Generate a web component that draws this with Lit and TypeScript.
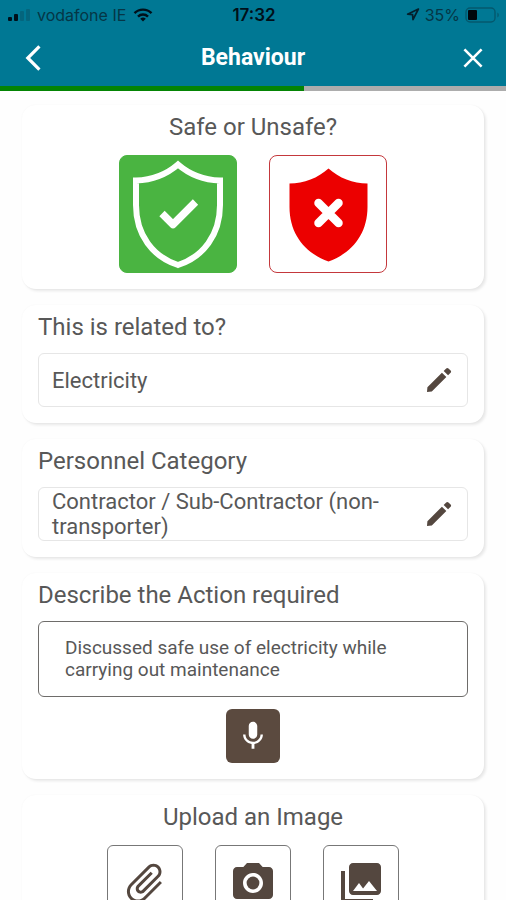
import { LitElement, html, css, svg } from "lit";
import { customElement, property, state } from "lit/decorators.js";
import { classMap } from "lit/directives/class-map.js";

const glyphs = {
  edit: svg`<path d="M3.300 17.400L3 21l3.600-.300L17.500 9.800l-3.300-3.300L3.300 17.400zM20.700 6.600c.500-.500.500-1.200 0-1.700l-1.600-1.600c-.500-.500-1.200-.500-1.700 0l-1.900 1.900 3.300 3.300 1.900-1.900z"/>`,
  mic: svg`<path d="M12 14c1.66 0 2.99-1.34 2.99-3L15 5c0-1.66-1.34-3-3-3S9 3.34 9 5v6c0 1.66 1.34 3 3 3zm5.3-3c0 3-2.54 5.1-5.3 5.1S6.7 14 6.7 11H5c0 3.41 2.72 6.23 6 6.72V21h2v-3.28c3.28-.48 6-3.3 6-6.72h-1.7z"/>`,
  clip: svg`<path transform="rotate(45 12 12)" d="M16.5 6v11.5c0 2.21-1.79 4-4 4s-4-1.79-4-4V5c0-1.38 1.12-2.5 2.5-2.5s2.5 1.12 2.5 2.5v10.5c0 .55-.45 1-1 1s-1-.45-1-1V6H10v9.5c0 1.38 1.12 2.5 2.5 2.5s2.5-1.12 2.5-2.5V5c0-2.21-1.79-4-4-4S7 2.79 7 5v12.5c0 3.04 2.46 5.5 5.5 5.5s5.5-2.46 5.5-5.5V6h-1.5z"/>`,
  camera: svg`<circle cx="12" cy="12" r="3.2"/><path d="M9 2L7.17 4H4c-1.1 0-2 .9-2 2v12c0 1.1.9 2 2 2h16c1.1 0 2-.9 2-2V6c0-1.1-.9-2-2-2h-3.17L15 2H9zm3 15c-2.76 0-5-2.24-5-5s2.24-5 5-5 5 2.24 5 5-2.24 5-5 5z"/>`,
  gallery: svg`<path d="M22 16V4c0-1.1-.9-2-2-2H8c-1.1 0-2 .9-2 2v12c0 1.1.9 2 2 2h12c1.1 0 2-.9 2-2zm-11-4l2.03 2.71L16 11l4 5H8l3-4zM2 6v14c0 1.1.9 2 2 2h14v-2H4V6H2z"/>`,
};

@customElement("app-icon")
class AppIcon extends LitElement {
  @property() name: keyof typeof glyphs = "edit";

  static styles = css`
    :host {
      display: block;
      flex: none;
    }
    .icon {
      display: block;
      width: 100%;
      height: 100%;
      fill: currentColor;
    }
  `;

  render() {
    return html`<svg class="icon" viewBox="0 0 24 24" aria-hidden="true">${glyphs[this.name]}</svg>`;
  }
}

@customElement("status-bar")
class StatusBar extends LitElement {
  static styles = css`
    :host {
      display: grid;
      grid-template-columns: 1fr auto 1fr;
      align-items: center;
      height: 29px;
      padding: 0 6px 0 8px;
      font: 500 16px/20px Inter, sans-serif;
      color: #00101a;
    }
    .side {
      display: flex;
      align-items: center;
      gap: 7px;
    }
    .end {
      justify-content: flex-end;
      gap: 5px;
    }
    .soft {
      font-weight: 400;
      color: #053646;
    }
    .time {
      font-size: 17px;
      font-weight: 600;
    }
    svg {
      display: block;
    }
  `;

  render() {
    return html`
      <div class="side">
        <svg width="22" height="12" viewBox="0 0 22 12" aria-hidden="true">
          <rect x="0" y="8" width="4" height="4" rx="1" fill="#00101a" />
          <rect x="6" y="5" width="4" height="7" rx="1" fill="#00101a" />
          <rect x="12" y="2" width="4" height="10" rx="1" fill="#04657d" />
          <rect x="18" y="0" width="4" height="12" rx="1" fill="#04657d" />
        </svg>
        <span class="soft">vodafone IE</span>
        <svg width="20" height="14" viewBox="0 0 20 14" aria-hidden="true">
          <g fill="none" stroke="#00101a" stroke-width="2.4">
            <path d="M1.5 5.2a12 12 0 0 1 17 0" />
            <path d="M5 8.6a7 7 0 0 1 10 0" />
          </g>
          <path d="M10 13.6l-2.800-2.800a4 4 0 0 1 5.600 0z" fill="#00101a" />
        </svg>
      </div>
      <span class="time">17:32</span>
      <div class="side end">
        <svg width="14" height="13" viewBox="0 0 14 13" aria-hidden="true">
          <path d="M12.4 1L1.6 6.2l5 .5.4 5z" fill="none" stroke="#04202c" stroke-width="1.7" stroke-linejoin="round" />
        </svg>
        <span class="soft">35%</span>
        <svg width="35" height="16" viewBox="0 0 35 16" aria-hidden="true">
          <rect x="1" y="1" width="29" height="14" rx="4" fill="none" stroke="#04586d" stroke-width="1.4" />
          <rect x="3" y="3" width="9" height="10" rx="1" fill="#00060c" />
          <path d="M32.4 5.4a3 3 0 0 1 0 5.2z" fill="#04586d" />
        </svg>
      </div>
    `;
  }
}

@customElement("app-root")
class AppRoot extends LitElement {
  @state() private verdict = "safe";

  static styles = css`
    :host {
      display: flex;
      flex-direction: column;
      height: 100vh;
      background: #fefefe;
      color: #585858;
      font-family: Roboto, sans-serif;
    }
    * {
      box-sizing: border-box;
    }
    button,
    textarea {
      margin: 0;
      font-family: inherit;
      color: inherit;
    }
    button {
      padding: 0;
      border: 0;
      background: none;
      cursor: pointer;
    }
    .top {
      flex: none;
      background: #007894;
    }
    .nav {
      display: grid;
      grid-template-columns: 32px 1fr 32px;
      align-items: center;
      height: 57px;
      padding: 0 17px;
      color: #fff;
    }
    .nav-button {
      display: grid;
      place-items: center;
      height: 32px;
    }
    .nav-icon {
      fill: none;
      stroke: currentColor;
    }
    .title {
      margin: 0;
      font-size: 23px;
      line-height: 28px;
      font-weight: 700;
      text-align: center;
    }
    .progress {
      display: block;
      appearance: none;
      width: 100%;
      height: 5px;
      border: 0;
      background: #acacac;
    }
    .progress::-webkit-progress-bar {
      background: #acacac;
    }
    .progress::-webkit-progress-value {
      background: #048404;
    }
    .cards {
      flex: 1;
      min-height: 0;
      overflow-y: auto;
      scrollbar-width: none;
      display: flex;
      flex-direction: column;
      gap: 16px;
      padding: 14px 22px;
    }
    .card {
      flex: none;
      padding: 8px 16px 16px;
      border-radius: 14px;
      background: #fff;
      box-shadow: 2px 2px 3px rgba(0, 0, 0, 0.09), 0 0 2px rgba(0, 0, 0, 0.04);
    }
    .heading {
      display: block;
      margin: 0 0 12px;
      font-size: 24px;
      line-height: 28px;
      font-weight: 400;
    }
    .heading.centered {
      margin-bottom: 14px;
      text-align: center;
    }
    .row {
      display: flex;
      justify-content: center;
      gap: 32px;
    }
    .choice {
      width: 118px;
      height: 118px;
      border: 1px solid #c4383c;
      border-radius: 8px;
      overflow: hidden;
    }
    .choice.safe {
      border-color: #4ab441;
      background: #4ab441;
    }
    .choice svg {
      display: block;
    }
    .field {
      display: flex;
      align-items: center;
      justify-content: space-between;
      gap: 24px;
      width: 100%;
      height: 54px;
      padding: 0 12px 0 13px;
      border: 1px solid #e6e6e6;
      border-radius: 6px;
      font-size: 22px;
      line-height: 25px;
      text-align: left;
    }
    .field-icon {
      width: 32px;
      height: 32px;
      color: #54473f;
    }
    .notes {
      display: block;
      width: 100%;
      height: 76px;
      padding: 15px 26px;
      border: 1px solid #6e6c6a;
      border-radius: 6px;
      background: none;
      font-size: 19px;
      line-height: 22px;
      resize: none;
      outline: none;
    }
    .mic {
      display: grid;
      place-items: center;
      width: 54px;
      height: 54px;
      margin: 12px auto 0;
      border-radius: 6px;
      background: #5b4a3f;
      color: #fff;
    }
    .mic-icon {
      width: 34px;
      height: 34px;
    }
    .upload {
      display: grid;
      place-items: center;
      width: 76px;
      height: 76px;
      border: 1px solid #777;
      border-radius: 6px;
      color: #54473f;
    }
    .upload-icon {
      width: 48px;
      height: 48px;
    }
  `;

  private renderPicker(id: string, label: string, value: string) {
    return html`
      <section class="card">
        <label class="heading" for=${id}>${label}</label>
        <button class="field" id=${id} type="button" aria-haspopup="listbox">
          <span>${value}</span>
          <app-icon class="field-icon" name="edit"></app-icon>
        </button>
      </section>
    `;
  }

  private renderUpload(name: string, label: string) {
    return html`
      <button class="upload" type="button" aria-label=${label}>
        <app-icon class="upload-icon" name=${name}></app-icon>
      </button>
    `;
  }

  private renderChoice(kind: string, label: string, art: unknown) {
    return html`
      <button
        class=${classMap({ choice: true, [kind]: true })}
        type="button"
        aria-label=${label}
        aria-pressed=${this.verdict === kind}
        @click=${() => (this.verdict = kind)}
      >
        <svg width="116" height="116" viewBox="1 1 116 116" aria-hidden="true">${art}</svg>
      </button>
    `;
  }

  render() {
    return html`
      <header class="top">
        <status-bar></status-bar>
        <div class="nav">
          <button class="nav-button" type="button" aria-label="Back">
            <svg class="nav-icon" width="16" height="26" viewBox="0 0 16 26" stroke-width="3.2">
              <path d="M14.4 1.4L2.8 13l11.6 11.6" />
            </svg>
          </button>
          <h1 class="title">Behaviour</h1>
          <button class="nav-button" type="button" aria-label="Close">
            <svg class="nav-icon" width="20" height="20" viewBox="0 0 20 20" stroke-width="2.6">
              <path d="M1.4 1.4l17.2 17.2M18.6 1.4L1.4 18.6" />
            </svg>
          </button>
        </div>
        <progress class="progress" value="60" max="100" aria-label="Form progress"></progress>
      </header>
      <main class="cards">
        <section class="card">
          <h2 class="heading centered">Safe or Unsafe?</h2>
          <div class="row">
            ${this.renderChoice(
              "safe",
              "Safe",
              svg`<g fill="none" stroke="#fff">
                <path stroke-width="6" d="M59 9.500C48 19 33 25 17 25.500V50C17 80 34 102 59 110C84 102 101 80 101 50V25.500C85 25 70 19 59 9.500Z"/>
                <path stroke-width="7.500" stroke-linejoin="round" d="M43 58.500L54 69.500L76.500 47"/>
              </g>`
            )}
            ${this.renderChoice(
              "unsafe",
              "Unsafe",
              svg`<path fill="#ec0000" d="M59.500 13.500C49 23 35 28.500 20.500 28.500V52C20.500 79 36 98 59.500 106.500C83 98 98.500 79 98.500 52V28.500C84 28.500 70 23 59.500 13.500Z"/>
              <path stroke="#fff" stroke-width="8.500" stroke-linecap="round" d="M49.500 48L69.500 68M69.500 48L49.500 68"/>`
            )}
          </div>
        </section>
        ${this.renderPicker("related", "This is related to?", "Electricity")}
        ${this.renderPicker("category", "Personnel Category", "Contractor / Sub-Contractor (non-transporter)")}
        <section class="card">
          <label class="heading" for="action">Describe the Action required</label>
          <textarea
            class="notes"
            id="action"
            spellcheck="false"
            .value=${"Discussed safe use of electricity while carrying out maintenance"}
          ></textarea>
          <button class="mic" type="button" aria-label="Dictate">
            <app-icon class="mic-icon" name="mic"></app-icon>
          </button>
        </section>
        <section class="card">
          <h2 class="heading centered">Upload an Image</h2>
          <div class="row">
            ${this.renderUpload("clip", "Attach a file")}
            ${this.renderUpload("camera", "Take a photo")}
            ${this.renderUpload("gallery", "Choose from gallery")}
          </div>
        </section>
      </main>
    `;
  }
}
